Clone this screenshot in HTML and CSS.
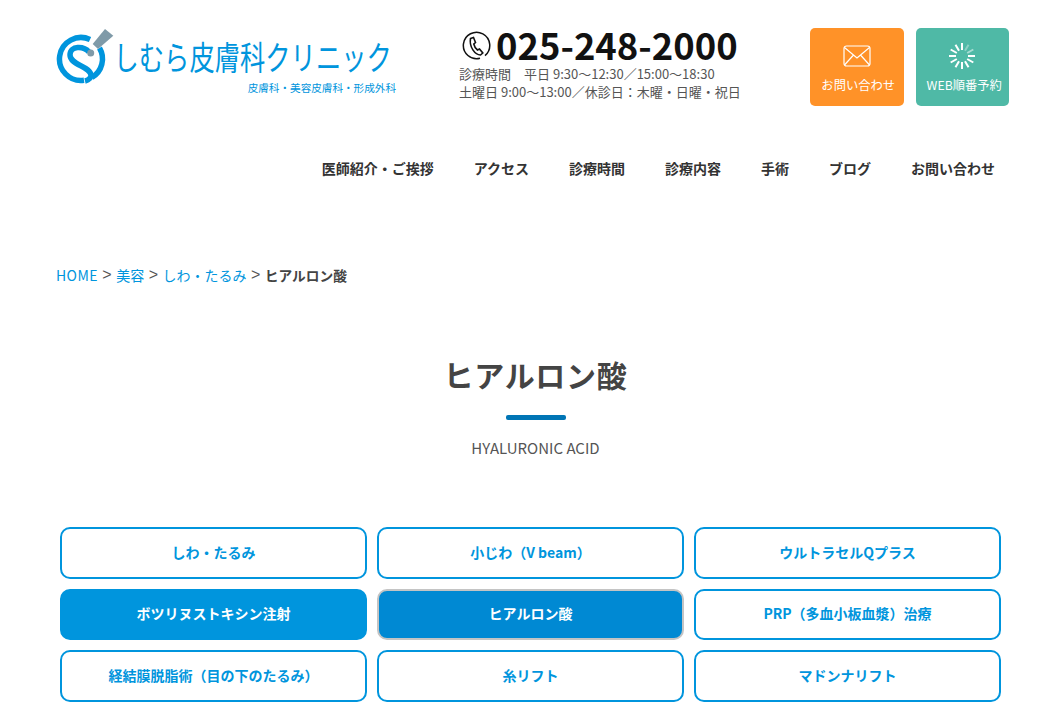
FILE: index.html
```html
<!DOCTYPE html>
<html lang="ja">
<head>
<meta charset="utf-8">
<title>ヒアルロン酸</title>
<link rel="stylesheet" href="styles.css">
</head>
<body>
<header class="top">
  <a class="logo" href="#">
    <svg class="logo-mark" width="60" height="60" viewBox="0 0 60 60" fill="none" stroke="#0095dd">
      <path d="M34 11.500A21.500 21.500 0 1 0 28 52.300" stroke-width="5.500"/>
      <path d="M43.500 20A21.500 21.500 0 0 1 36 49.400" stroke-width="5.500"/>
      <path d="M33 24C28 18 14 17 14 27C14 37 34 38 35 47C35 50 33 52 29 53" stroke-width="5.500"/>
      <path d="M49 1L57.300 7.700L42 21L36.700 16Z" fill="#7f9aa8" stroke="none"/>
      <circle cx="34.700" cy="25" r="3.500" fill="#7f9aa8" stroke="none"/>
    </svg>
    <span class="logo-words">
      <span class="logo-name">しむら皮膚科クリニック</span>
      <span class="logo-sub">皮膚科・美容皮膚科・形成外科</span>
    </span>
  </a>
  <div class="tel">
    <div class="tel-row">
      <svg class="tel-icon" width="32" height="32" viewBox="0 0 32 32" fill="none" stroke="#111">
        <path d="M20 28.200A13.200 13.200 0 1 1 25 25.600" stroke-width="1.500"/>
        <path d="M10.500 8.500L13.500 7.500L15.500 12.500L13.800 14C14.300 16.500 15.500 18.500 17.500 20L19.500 19L22.800 23L20.500 25C15 25 9 17 10.500 8.500Z" stroke-width="1.600"/>
      </svg>
      <span class="tel-number">025-248-2000</span>
    </div>
    <p class="tel-hours">診療時間　平日 9:30〜12:30／15:00〜18:30</p>
    <p class="tel-hours">土曜日 9:00〜13:00／休診日：木曜・日曜・祝日</p>
  </div>
  <div class="cta-group">
    <a class="cta cta-mail" href="#">
      <svg width="28" height="22" viewBox="0 0 28 22" fill="none" stroke="#fff" stroke-width="1.200">
        <rect x="1" y="1" width="26" height="20" rx="2.500"/>
        <path d="M1.500 2.500L14 13L26.500 2.500M1.500 20L10.500 10M26.500 20L17.500 10"/>
      </svg>
      <span>お問い合わせ</span>
    </a>
    <a class="cta cta-web" href="#">
      <svg width="28" height="28" viewBox="0 0 28 28" stroke="#fff" stroke-width="2">
        <path d="M14 1V8"/>
        <path d="M20.500 2.700L17 8.800" stroke-opacity=".35"/>
        <path d="M25.300 7.500L19.200 11" stroke-opacity=".5"/>
        <path d="M27 14H20"/>
        <path d="M25.300 20.500L19.200 17"/>
        <path d="M20.500 25.300L17 19.200"/>
        <path d="M14 27V20"/>
        <path d="M7.500 25.300L11 19.200"/>
        <path d="M2.700 20.500L8.800 17"/>
        <path d="M1 14H8"/>
        <path d="M2.700 7.500L8.800 11"/>
        <path d="M7.500 2.700L11 8.800"/>
      </svg>
      <span>WEB順番予約</span>
    </a>
  </div>
</header>
<nav class="gnav">
  <a href="#">医師紹介・ご挨拶</a>
  <a href="#">アクセス</a>
  <a href="#">診療時間</a>
  <a href="#">診療内容</a>
  <a href="#">手術</a>
  <a href="#">ブログ</a>
  <a href="#">お問い合わせ</a>
</nav>
<div class="crumbs">
  <a class="home" href="#">HOME</a><span class="sep">&gt;</span><a href="#">美容</a><span class="sep">&gt;</span><a href="#">しわ・たるみ</a><span class="sep">&gt;</span><strong>ヒアルロン酸</strong>
</div>
<section class="heading">
  <h1>ヒアルロン酸</h1>
  <div class="heading-bar"></div>
  <p>HYALURONIC ACID</p>
</section>
<div class="menu">
  <a class="item" href="#">しわ・たるみ</a>
  <a class="item" href="#">小じわ（V beam）</a>
  <a class="item" href="#">ウルトラセルQプラス</a>
  <a class="item item-on" href="#">ボツリヌストキシン注射</a>
  <a class="item item-focus" href="#">ヒアルロン酸</a>
  <a class="item" href="#">PRP（多血小板血漿）治療</a>
  <a class="item" href="#">経結膜脱脂術（目の下のたるみ）</a>
  <a class="item" href="#">糸リフト</a>
  <a class="item" href="#">マドンナリフト</a>
</div>
</body>
</html>
```
FILE: styles.css
```css
* { box-sizing: border-box; }
html, body { margin: 0; padding: 0; }
body {
  height: 724px;
  overflow: hidden;
  background: #fff;
  color: #444;
  font-family: "Noto Sans CJK JP", "Noto Sans", sans-serif;
}
a { text-decoration: none; color: inherit; }
p { margin: 0; }

.top {
  display: flex;
  align-items: flex-start;
  height: 106px;
  margin-top: 28px;
  padding-left: 56px;
}
.logo {
  display: flex;
  width: 403px;
  color: #0095dd;
}
.logo-mark { display: block; flex: none; }
.logo-words { display: block; width: 280px; }
.logo-name {
  display: block;
  margin: 10px 0 0 -2.500px;
  font-size: 25.300px;
  line-height: 36px;
  white-space: nowrap;
  transform: scaleY(1.3);
  transform-origin: 0 50%;
  font-weight: 400;
}
.logo-sub {
  display: block;
  width: 280px;
  margin-top: 7px;
  font-size: 10.600px;
  line-height: 14px;
  text-align: right;
  white-space: nowrap;
}
.tel { width: 351px; }
.tel-row { display: flex; align-items: center; height: 35px; margin-bottom: 2px; }
.tel-icon { flex: none; margin: 0 4px 0 1px; }
.tel-number {
  display: block;
  height: 34px;
  font-weight: 700;
  font-size: 36.400px;
  line-height: 30px;
  color: #111;
}
.tel-hours {
  font-size: 13px;
  line-height: 17.500px;
  color: #555;
  white-space: nowrap;
}
.cta-group { display: flex; gap: 12px; }
.cta {
  display: flex;
  flex-direction: column;
  align-items: center;
  width: 93.500px;
  height: 78px;
  border-radius: 5px;
  color: #fff;
  font-size: 12.300px;
  line-height: 16px;
  white-space: nowrap;
}
.cta span { margin-top: auto; margin-bottom: 13px; }
.cta-mail { background: #ff9228; padding-top: 17px; }
.cta-mail span { margin-left: 3px; }
.cta-web { background: #4fb9a6; padding-top: 14px; }
.cta-web span { margin-left: 4px; }

.gnav {
  display: flex;
  justify-content: flex-end;
  gap: 40px;
  padding-right: 68px;
  margin-top: 24px;
  font-size: 14px;
  line-height: 20px;
  font-weight: 700;
  color: #333;
}
.crumbs {
  display: flex;
  align-items: center;
  height: 20px;
  margin-top: 87px;
  padding-left: 56px;
  font-size: 14px;
  line-height: 20px;
  color: #555;
}
.crumbs a { color: #0095dd; }
.crumbs .home { letter-spacing: 0.400px; }
.crumbs .sep {
  margin: 0 4.500px;
  font-family: "Liberation Sans", sans-serif;
  font-size: 16px;
}
.crumbs strong { color: #444; font-weight: 700; font-size: 13.700px; }

.heading { padding-left: 8px; margin-top: 67px; text-align: center; }
.heading h1 {
  margin: 0;
  font-size: 30px;
  line-height: 44px;
  font-weight: 700;
  color: #444;
  letter-spacing: 0.700px;
}
.heading-bar {
  width: 60px;
  height: 5px;
  margin: 19px auto 0;
  background: #0075b5;
  border-radius: 2px;
}
.heading p {
  margin-top: 16px;
  font-size: 15px;
  line-height: 24px;
  color: #555;
}
.menu {
  display: grid;
  grid-template-columns: repeat(3, 307px);
  grid-auto-rows: 51.500px;
  gap: 10px;
  margin: 67px 0 0 60px;
}
.item {
  display: flex;
  align-items: center;
  justify-content: center;
  padding-bottom: 2px;
  border: 2px solid #0095dd;
  border-radius: 10px;
  background: #fff;
  color: #0095dd;
  font-size: 14px;
  font-weight: 700;
}
.item-on { background: #0095dd; color: #fff; }
.item-focus { background: #0089d3; border-color: #c4c4c4; color: #fff; }
```
